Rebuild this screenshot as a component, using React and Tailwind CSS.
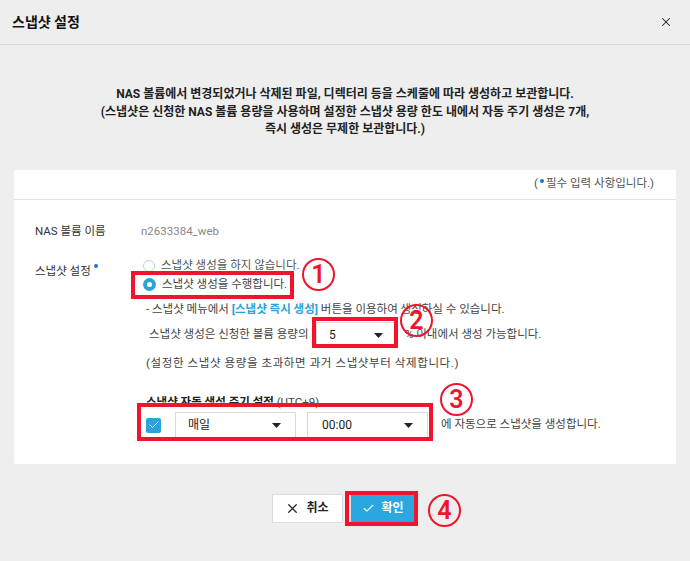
import { X, Check } from "lucide-react";

const font = { fontFamily: 'Roboto, "Noto Sans CJK KR", "Noto Sans", sans-serif' };

function Caret() {
  return (
    <svg width="9" height="5" viewBox="0 0 9 5" className="shrink-0">
      <path d="M0 0 L9 0 L4.5 5 Z" fill="#222" />
    </svg>
  );
}

function Select({ value, className }) {
  return (
    <div className={`flex items-center justify-between bg-white border border-[#d9d9d9] h-[26px] text-[12px] text-[#222] ${className}`}>
      <span>{value}</span>
      <Caret />
    </div>
  );
}

function Mark({ n, x, y }) {
  return (
    <div
      className="absolute w-[33px] h-[33px] rounded-full border-[2px] border-[#f0142d] flex items-center justify-center text-[#f0142d] text-[25px] font-semibold leading-none"
      style={{ left: x - 16, top: y - 16 }}
    >
      {n}
    </div>
  );
}

export default function App() {
  return (
    <div className="relative w-[690px] h-[561px] bg-[#eeeeee] text-[#333] overflow-hidden" style={font}>
      <div className="h-[45px] flex items-center justify-between pl-[12px] pr-[17px] border-b border-[#dadada]">
        <h1 className="text-[14px] font-bold text-[#111]">스냅샷 설정</h1>
        <X size={14} strokeWidth={1.8} className="text-[#222]" />
      </div>

      <div className="mt-[41px] text-center text-[12px] font-bold leading-[17.5px] text-[#222]">
        <p>NAS 볼륨에서 변경되었거나 삭제된 파일, 디렉터리 등을 스케줄에 따라 생성하고 보관합니다.</p>
        <p>(스냅샷은 신청한 NAS 볼륨 용량을 사용하며 설정한 스냅샷 용량 한도 내에서 자동 주기 생성은 7개,</p>
        <p>즉시 생성은 무제한 보관합니다.)</p>
      </div>

      <div className="mt-[31px] mx-[14px] h-[294px] bg-white rounded-[2px]">
        <div className="h-[30px] flex items-center justify-end pr-[22px] border-b border-[#e2e2e2] text-[11.5px] text-[#555]">
          (<span className="w-[4px] h-[4px] rounded-full bg-[#1f6fd0] mx-[2px] -mt-[6px]" />필수 입력 사항입니다.)
        </div>

        <div className="pl-[21px] pt-[22px] text-[11.5px]">
          <div className="flex h-[20px] items-center">
            <span className="w-[106px] text-[#333]">NAS 볼륨 이름</span>
            <span className="text-[#888]">n2633384_web</span>
          </div>

          <div className="flex mt-[15px]">
            <div className="w-[108px] pt-[6px] flex items-start">
              <span>스냅샷 설정</span>
              <span className="w-[4px] h-[4px] rounded-full bg-[#1f6fd0] ml-[3px] mt-[1px]" />
            </div>
            <div className="flex-1">
              <div className="flex items-center h-[18px] gap-[6px]">
                <span className="w-[12px] h-[12px] rounded-full border border-[#cfcfcf] bg-white" />
                <span className="text-[#555]">스냅샷 생성을 하지 않습니다.</span>
              </div>
              <div className="flex items-center h-[18px] mt-[1px] gap-[6px]">
                <span className="w-[13px] h-[13px] rounded-full bg-[#2aa3dc] flex items-center justify-center">
                  <span className="w-[5px] h-[5px] rounded-full bg-white" />
                </span>
                <span className="text-[#444]">스냅샷 생성을 수행합니다.</span>
              </div>

              <div className="pl-[3px] text-[#444]">
                <p className="h-[18px] mt-[6px] leading-[18px]">
                  - 스냅샷 메뉴에서 <span className="text-[#2aa3dc] font-bold">[스냅샷 즉시 생성]</span> 버튼을 이용하여 생성하실 수 있습니다.
                </p>
                <div className="flex items-center mt-[4px] h-[27px]">
                  <span className="pl-[3px] w-[170px]">스냅샷 생성은 신청한 볼륨 용량의</span>
                  <Select value="5" className="w-[80px] pl-[12px] pr-[12px]" />
                  <span className="ml-[9px]">% 이내에서 생성 가능합니다.</span>
                </div>
                <p className="h-[18px] mt-[5px] leading-[18px] tracking-[0.6px]">(설정한 스냅샷 용량을 초과하면 과거 스냅샷부터 삭제합니다.)</p>

                <p className="mt-[21px] h-[18px] leading-[18px]">
                  <span className="font-bold text-[#222]">스냅샷 자동 생성 주기 설정</span> (UTC+9)
                </p>
                <div className="flex items-center mt-[1px] h-[27px]">
                  <span className="w-[15px] h-[15px] rounded-[2px] bg-[#2aa3dc] flex items-center justify-center">
                    <Check size={12} strokeWidth={2} className="text-white" />
                  </span>
                  <Select value="매일" className="ml-[14px] w-[121px] pl-[12px] pr-[14px]" />
                  <Select value="00:00" className="ml-[11px] w-[121px] pl-[14px] pr-[14px]" />
                  <span className="ml-[13px]">에 자동으로 스냅샷을 생성합니다.</span>
                </div>
              </div>
            </div>
          </div>
        </div>
      </div>

      <div className="mt-[30px] flex justify-center gap-[8px] pr-[3px]">
        <button className="w-[71px] h-[29px] bg-white border border-[#dcdcdc] flex items-center justify-center gap-[6px] text-[12px] font-bold text-[#222]">
          <X size={15} strokeWidth={2} />
          취소
        </button>
        <button className="w-[65px] h-[29px] bg-[#2aa7df] flex items-center justify-center gap-[6px] text-[12px] font-bold text-white">
          <Check size={13} strokeWidth={2} />
          확인
        </button>
      </div>

      {/* annotation overlays */}
      <div className="absolute left-[131px] top-[271px] w-[163px] h-[28px] border-[4px] border-[#f0142d]" />
      <div className="absolute left-[312px] top-[317px] w-[86px] h-[31px] border-[4px] border-[#f0142d]" />
      <div className="absolute left-[137px] top-[403px] w-[296px] h-[38px] border-[4px] border-[#f0142d]" />
      <div className="absolute left-[345px] top-[491px] w-[73px] h-[35px] border-[4px] border-[#f0142d]" />
      <Mark n="1" x={318} y={274} />
      <Mark n="2" x={416} y={320} />
      <Mark n="3" x={456} y={399} />
      <Mark n="4" x={444} y={510} />
    </div>
  );
}
